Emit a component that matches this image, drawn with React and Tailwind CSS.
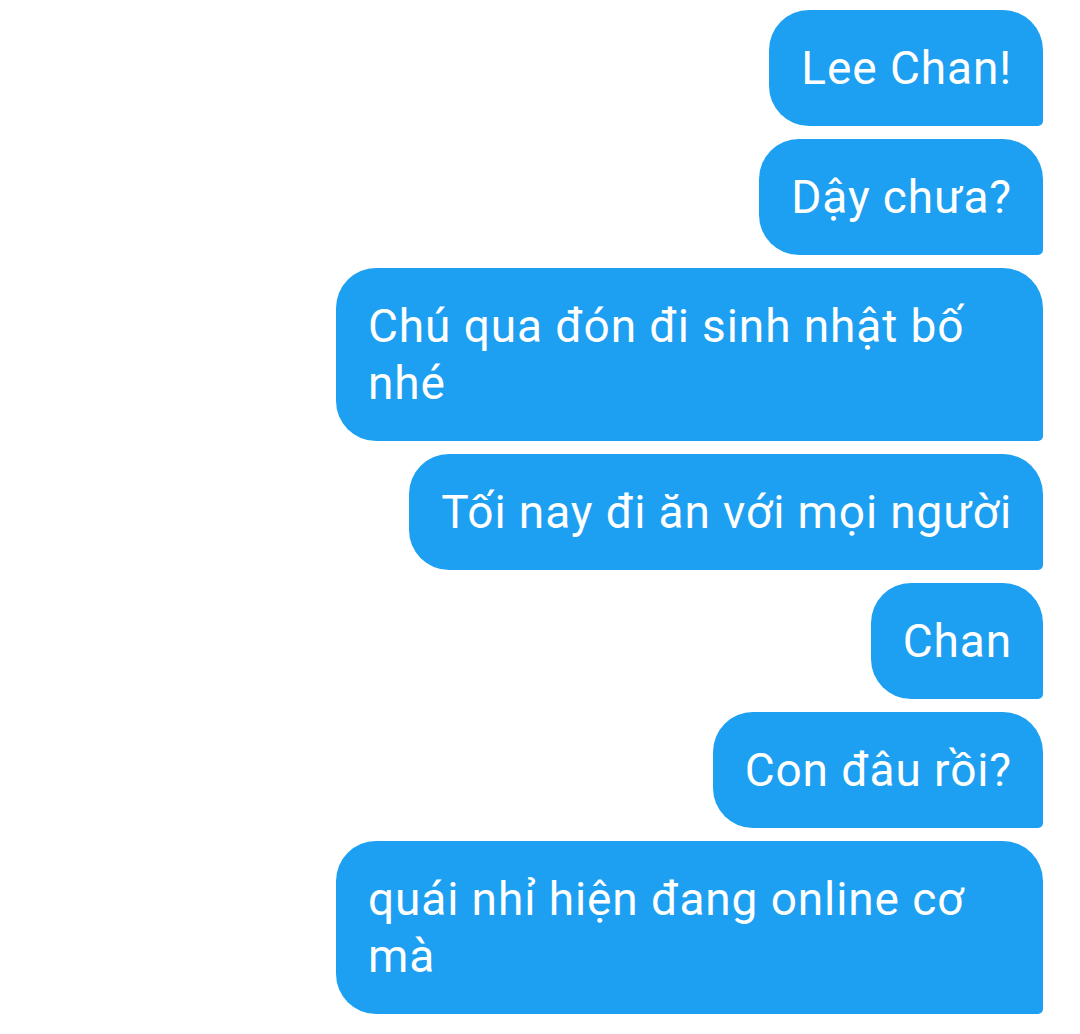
export default function App() {
  const msgs = [
    "Lee Chan!",
    "Dậy chưa?",
    "Chú qua đón đi sinh nhật bố nhé",
    "Tối nay đi ăn với mọi người",
    "Chan",
    "Con đâu rồi?",
    "quái nhỉ hiện đang online cơ mà",
  ];
  return (
    <div className="w-[1080px] h-[1034px] bg-white overflow-hidden flex flex-col items-end gap-[13px] pt-[10px] pr-[37px]" style={{ fontFamily: "Roboto, 'Noto Sans', sans-serif" }}>
      {msgs.map((m, i) => (
        <div
          key={i}
          className="max-w-[707px] bg-[#1da0f1] text-white text-[46px] leading-[57px] tracking-[0.9px] pl-[32px] pr-[31px] py-[29.5px] rounded-[40px] rounded-br-[5px]"
        >
          {m}
        </div>
      ))}
    </div>
  );
}
